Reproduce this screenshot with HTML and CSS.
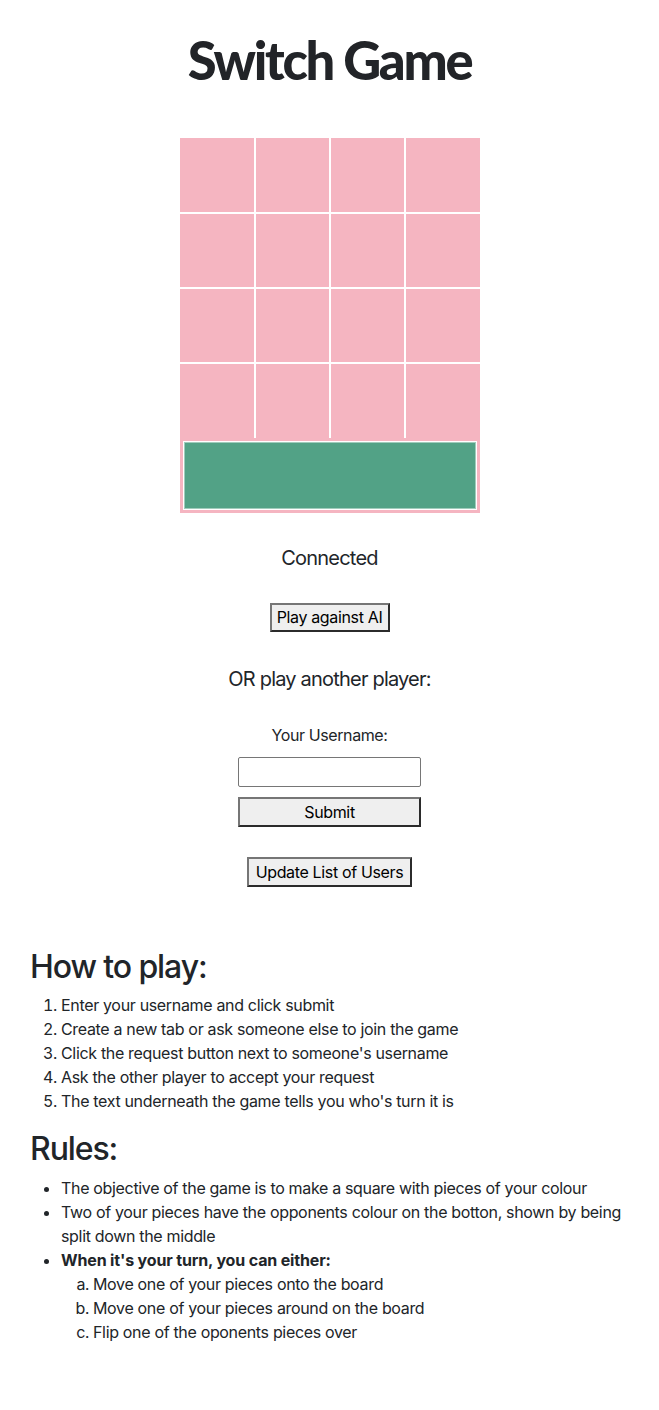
FILE: index.html
```html
<!DOCTYPE html>
<html lang="en">
<head>
<meta charset="utf-8">
<title>Switch Game</title>
<link rel="stylesheet" href="styles.css">
</head>
<body>
<main class="page">
  <h1 class="title">Switch Game</h1>

  <div class="board">
    <div class="grid">
      <div class="cell"></div><div class="cell"></div><div class="cell"></div><div class="cell"></div>
      <div class="cell"></div><div class="cell"></div><div class="cell"></div><div class="cell"></div>
      <div class="cell"></div><div class="cell"></div><div class="cell"></div><div class="cell"></div>
      <div class="cell"></div><div class="cell"></div><div class="cell"></div><div class="cell"></div>
    </div>
    <div class="tray-wrap"><div class="tray"></div></div>
  </div>

  <p class="status">Connected</p>
  <button class="btn btn-ai" type="button">Play against AI</button>
  <p class="or">OR play another player:</p>

  <form class="login">
    <label class="label" for="username">Your Username:</label>
    <input class="input" id="username" type="text">
    <button class="btn btn-submit" type="button">Submit</button>
  </form>

  <button class="btn btn-update" type="button">Update List of Users</button>

  <section class="info">
    <h2 class="heading">How to play:</h2>
    <ol class="steps">
      <li>Enter your username and click submit</li>
      <li>Create a new tab or ask someone else to join the game</li>
      <li>Click the request button next to someone's username</li>
      <li>Ask the other player to accept your request</li>
      <li>The text underneath the game tells you who's turn it is</li>
    </ol>
    <h2 class="heading heading-rules">Rules:</h2>
    <ul class="rules">
      <li>The objective of the game is to make a square with pieces of your colour</li>
      <li>Two of your pieces have the opponents colour on the botton, shown by being split down the middle</li>
      <li><strong>When it's your turn, you can either:</strong>
        <ol class="options">
          <li>Move one of your pieces onto the board</li>
          <li>Move one of your pieces around on the board</li>
          <li>Flip one of the oponents pieces over</li>
        </ol>
      </li>
    </ul>
  </section>
</main>
</body>
</html>
```
FILE: styles.css
```css
* { box-sizing: border-box; }

html, body {
  margin: 0;
  padding: 0;
  background: #ffffff;
}

body {
  font-family: Inter, "Noto Sans", "Liberation Sans", sans-serif;
  font-size: 16px;
  line-height: 24px;
  letter-spacing: -0.33px;
  color: #212529;
}

.page {
  display: flex;
  flex-direction: column;
  align-items: center;
  padding: 30px 0 60px;
}

.title {
  margin: 0;
  font-family: Lato, "Open Sans", sans-serif;
  font-weight: 900;
  font-size: 52.5px;
  line-height: 60px;
  letter-spacing: -2.3px;
  color: #222428;
}

.board {
  margin-top: 48px;
  width: 300px;
  background: #f5b5c1;
}

.grid {
  display: grid;
  grid-template-columns: 74px 73px 73px 74px;
  grid-template-rows: 74px 73px 73px 74px;
  gap: 2px;
  background: #ffffff;
}

.cell {
  background: #f5b5c1;
}

.tray-wrap {
  height: 75px;
  padding: 3px;
  background: #f5b5c1;
}

.tray {
  height: 69px;
  background: #52a286;
  border: 1px solid #ffffff;
  box-shadow: inset 0 0 0 1px rgba(255, 255, 255, 0.45);
}

.status,
.or {
  margin: 33px 0 0;
  font-size: 20px;
  line-height: 24px;
  letter-spacing: -0.8px;
}

.or {
  margin-top: 35px;
}

.btn {
  font-family: Inter, "Noto Sans", "Liberation Sans", sans-serif;
  font-size: 16px;
  line-height: 19px;
  letter-spacing: -0.35px;
  color: #000000;
  background: #efefef;
  border-style: solid;
  border-width: 2px;
  border-color: #767676 #2b2b2b #2b2b2b #767676;
  border-radius: 0;
  padding: 3px 6px;
  height: 30px;
}

.btn-ai {
  margin-top: 33px;
  height: 29px;
  width: 120px;
  padding: 0;
}

.login {
  margin-top: 32px;
  display: flex;
  flex-direction: column;
  align-items: center;
}

.label {
  font-size: 16px;
  line-height: 24px;
  letter-spacing: -0.4px;
}

.input {
  margin-top: 10px;
  width: 183px;
  height: 30px;
  border: 1px solid #767676;
  border-radius: 2px;
  background: #ffffff;
}

.btn-submit {
  margin-top: 10px;
  width: 183px;
}

.btn-update {
  margin-top: 30px;
  width: 165px;
  padding: 0;
}

.info {
  align-self: stretch;
  margin-top: 61px;
  padding: 0 30px;
}

.heading {
  margin: 0;
  font-size: 32px;
  font-weight: 500;
  line-height: 38px;
  letter-spacing: -1.1px;
}

.steps {
  margin: 7px 0 0;
  padding-left: 31px;
}

.heading-rules {
  margin-top: 17px;
}

.rules {
  margin: 8px 0 0;
  padding-left: 31px;
}

.rules strong {
  font-weight: 700;
  letter-spacing: -0.15px;
}

.options {
  list-style-type: lower-alpha;
  margin: 0;
  padding-left: 32px;
}
```
